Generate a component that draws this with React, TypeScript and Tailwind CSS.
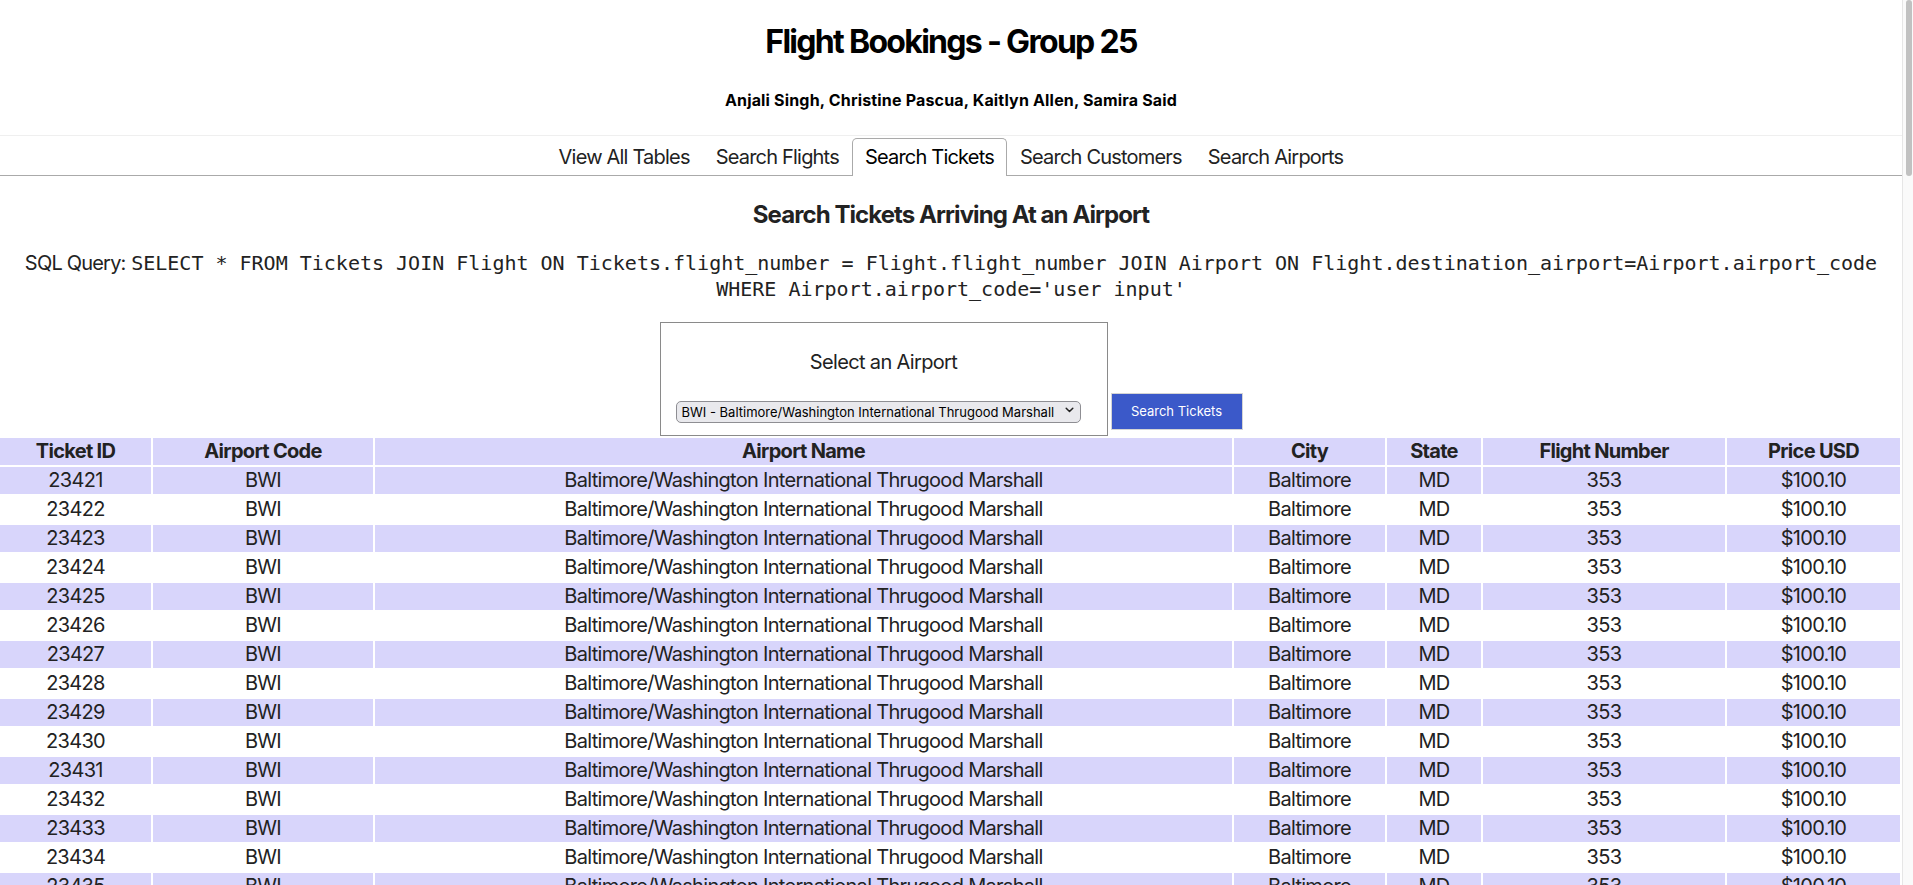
import { useState } from "react";

const tabs = [
  "View All Tables",
  "Search Flights",
  "Search Tickets",
  "Search Customers",
  "Search Airports",
];

const columns = [
  { label: "Ticket ID", w: "w-[151px]" },
  { label: "Airport Code", w: "w-[220px]" },
  { label: "Airport Name", w: "" },
  { label: "City", w: "w-[151px]" },
  { label: "State", w: "w-[94px]" },
  { label: "Flight Number", w: "w-[242px]" },
  { label: "Price USD", w: "w-[173px]" },
];

const tickets = Array.from({ length: 138 }, (_, i) => ({
  id: 23421 + i,
  code: "BWI",
  name: "Baltimore/Washington International Thrugood Marshall",
  city: "Baltimore",
  state: "MD",
  flight: 353,
  price: "$100.10",
}));

export default function App() {
  const [active, setActive] = useState("Search Tickets");
  const [airport, setAirport] = useState("BWI");

  return (
    <div className="flex h-screen overflow-hidden bg-white text-black font-['Inter','Noto_Sans',sans-serif]">
      <main className="min-w-0 flex-1 overflow-hidden">
        <header className="pt-[22px] pb-[24px] border-b border-[#efefef] text-center">
          <h1 className="text-[32px] font-bold leading-[40px] tracking-[-1.7px]">
            Flight Bookings - Group 25
          </h1>
          <h3 className="mt-[27px] text-[16px] font-bold leading-[22px] tracking-[0.17px]">
            Anjali Singh, Christine Pascua, Kaitlyn Allen, Samira Said
          </h3>
        </header>

        <ul className="mt-[2px] flex justify-center border-b border-[#aaa]">
          {tabs.map((t) => (
            <li
              key={t}
              onClick={() => setActive(t)}
              className={
                t === active
                  ? "-mb-px cursor-pointer rounded-t-[5px] border border-b-0 border-[#aaa] bg-white px-[12px] pt-[6px] pb-[7px] text-[20px] leading-[24px] tracking-[-0.8px] text-black"
                  : "-mb-px cursor-pointer border border-b-0 border-transparent px-[12px] pt-[6px] pb-[7px] text-[20px] leading-[24px] tracking-[-0.8px] text-[#222]"
              }
            >
              {t}
            </li>
          ))}
        </ul>

        <section className="text-center">
          <h2 className="mt-[24px] text-[24px] font-bold leading-[29px] tracking-[-0.93px] text-[#222]">
            Search Tickets Arriving At an Airport
          </h2>
          <p className="mt-[21px] text-[20px] leading-[26px] text-[#222]">
            <span className="tracking-[-0.8px]">SQL Query:</span>{" "}
            <code className="font-['DejaVu_Sans_Mono','Liberation_Mono',monospace] text-[20px]">
              SELECT * FROM Tickets JOIN Flight ON Tickets.flight_number =
              Flight.flight_number JOIN Airport ON
              Flight.destination_airport=Airport.airport_code WHERE
              Airport.airport_code='user input'
            </code>
          </p>

          <form
            className="mt-[20px] flex items-end justify-center gap-[3px]"
            onSubmit={(e) => e.preventDefault()}
          >
            <div className="flex w-[448px] flex-col items-center border border-[#8a8a8a] pt-[27px] pb-[12px]">
              <label className="text-[20px] leading-[24px] tracking-[-0.65px] text-[#222]">
                Select an Airport
              </label>
              <div className="relative mt-[25px] mr-[11px]">
                <select
                  value={airport}
                  onChange={(e) => setAirport(e.target.value)}
                  className="h-[22px] w-[405px] appearance-none rounded-[5px] border border-[#8e8e93] bg-[#e9e9ed] pl-[5px] pr-[22px] text-left text-[13px] leading-[18px] text-black"
                >
                  <option value="BWI">
                    BWI - Baltimore/Washington International Thrugood Marshall
                  </option>
                </select>
                <svg
                  className="pointer-events-none absolute right-[7px] top-[7px]"
                  width="9"
                  height="8"
                  viewBox="0 0 9 8"
                  fill="none"
                >
                  <path
                    d="M1.2 2.2 L4.5 5.5 L7.8 2.2"
                    stroke="#222"
                    strokeWidth="1.5"
                    strokeLinecap="round"
                    strokeLinejoin="round"
                  />
                </svg>
              </div>
            </div>
            <button
              type="submit"
              className="mb-[6px] h-[37px] w-[132px] border border-[#d4d4d4] bg-[#3b59c9] text-[13px] text-white"
            >
              Search Tickets
            </button>
          </form>
        </section>

        <table className="-ml-[2px] w-[calc(100%+2px)] border-separate border-spacing-[2px] text-[20px] leading-[25px] tracking-[-0.7px] text-[#222]">
          <thead>
            <tr>
              {columns.map((c) => (
                <th
                  key={c.label}
                  className={`${c.w} bg-[#d8d5fb] p-px text-center font-bold`}
                >
                  {c.label}
                </th>
              ))}
            </tr>
          </thead>
          <tbody>
            {tickets.map((t, i) => (
              <tr key={t.id} className={i % 2 === 0 ? "bg-[#d8d5fb]" : "bg-white"}>
                <td className="p-px text-center">{t.id}</td>
                <td className="p-px text-center">{t.code}</td>
                <td className="p-px text-center">{t.name}</td>
                <td className="p-px text-center">{t.city}</td>
                <td className="p-px text-center">{t.state}</td>
                <td className="p-px text-center">{t.flight}</td>
                <td className="p-px text-center">{t.price}</td>
              </tr>
            ))}
          </tbody>
        </table>
      </main>

      {/* page scrollbar */}
      <aside className="w-[11px] shrink-0 border-l border-[#e6e6e6] bg-[#fafafa] pl-[3px] pr-px">
        <div className="h-[176px] rounded-full bg-[#c1c1c1]" />
      </aside>
    </div>
  );
}
